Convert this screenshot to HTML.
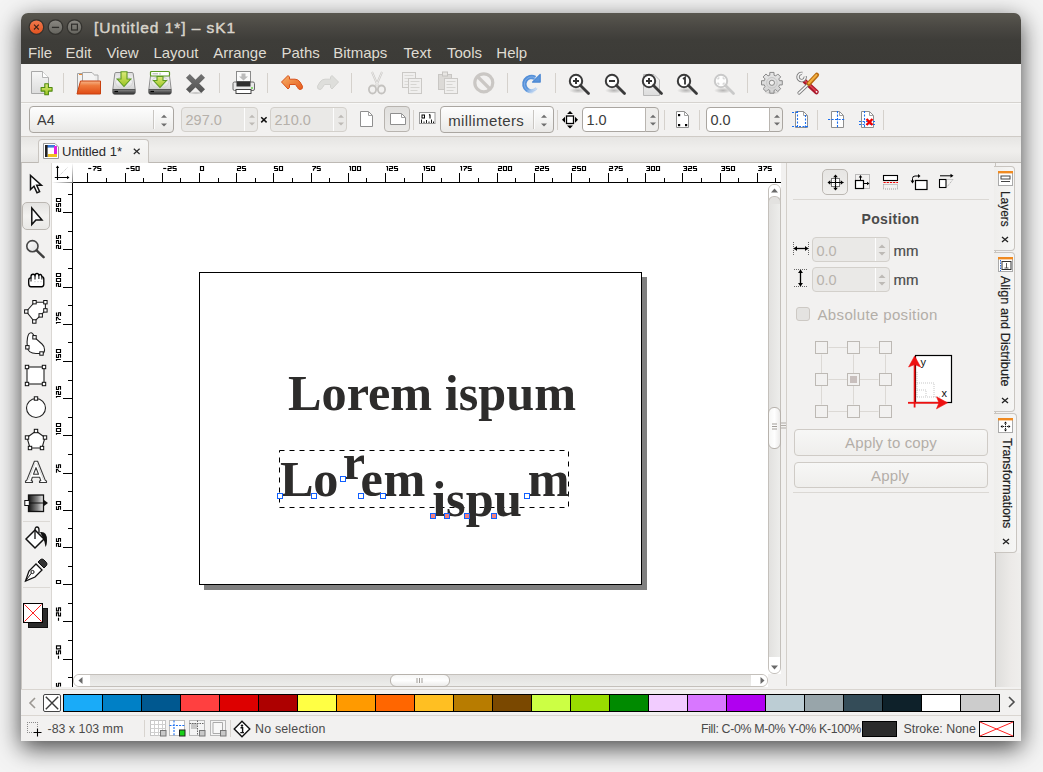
<!DOCTYPE html><html><head><meta charset="utf-8"><style>
*{margin:0;padding:0;box-sizing:border-box}
html,body{width:1043px;height:772px;overflow:hidden;background:#f4f4f4;font-family:"Liberation Sans",sans-serif}
.a{position:absolute}
.t{position:absolute;white-space:nowrap;line-height:1}
svg{position:absolute;overflow:visible}
#win{position:absolute;left:21px;top:13px;width:1000px;height:728px;background:#f2f1f0;border-radius:7px 7px 0 0;box-shadow:0 7px 24px rgba(0,0,0,0.72)}
.mi{position:absolute;top:45px;font-size:15px;color:#dfdbd2;line-height:1;white-space:nowrap}
.vsep{position:absolute;width:1px;background:#d5d1cc}
</style></head><body>
<div id="win"></div>
<svg width="0" height="0" style="position:absolute"><defs>
<linearGradient id="gpage" x1="0" y1="0" x2="0" y2="1"><stop offset="0" stop-color="#f7f7f7"/><stop offset="1" stop-color="#dcdcdc"/></linearGradient>
<linearGradient id="gorange" x1="0" y1="0" x2="0" y2="1"><stop offset="0" stop-color="#f6b58a"/><stop offset="0.35" stop-color="#ee7a3c"/><stop offset="1" stop-color="#e04a14"/></linearGradient>
<linearGradient id="ghdd" x1="0" y1="0" x2="0" y2="1"><stop offset="0" stop-color="#dcdcdc"/><stop offset="0.5" stop-color="#f4f4f4"/><stop offset="1" stop-color="#d0d0d0"/></linearGradient>
<linearGradient id="ggreen" x1="0" y1="0" x2="0" y2="1"><stop offset="0" stop-color="#dbe97a"/><stop offset="1" stop-color="#9cc420"/></linearGradient>
<linearGradient id="gundo" x1="0" y1="0" x2="1" y2="1"><stop offset="0" stop-color="#f7b36a"/><stop offset="1" stop-color="#e65a1a"/></linearGradient>
<radialGradient id="gshadow" cx="0.5" cy="0.5" r="0.5"><stop offset="0" stop-color="#000" stop-opacity="0.25"/><stop offset="1" stop-color="#000" stop-opacity="0"/></radialGradient>
</defs></svg>
<div class="a" style="left:21px;top:13px;width:1000px;height:51px;border-radius:7px 7px 0 0;background:linear-gradient(#59574f,#4a4843 14px,#3e3d39 27px,#3c3b37)"></div>
<svg style="left:21px;top:13px" width="80" height="30" viewBox="0 0 80 30"><defs><linearGradient id="gcl" x1="0" y1="0" x2="0" y2="1"><stop offset="0" stop-color="#f27a4e"/><stop offset="1" stop-color="#e2521f"/></linearGradient>
<linearGradient id="ggr" x1="0" y1="0" x2="0" y2="1"><stop offset="0" stop-color="#8a8882"/><stop offset="1" stop-color="#65645e"/></linearGradient></defs>
<circle cx="15.4" cy="14.1" r="7.3" fill="url(#gcl)" stroke="#33322e" stroke-width="1.2"/>
<path d="M13 11.7 L17.8 16.5 M17.8 11.7 L13 16.5" stroke="#3a2218" stroke-width="1.1"/>
<circle cx="34.5" cy="14.1" r="7.3" fill="url(#ggr)" stroke="#33322e" stroke-width="1.2"/>
<path d="M30.9 14.4 H38.1" stroke="#2f2e2b" stroke-width="1.3"/>
<circle cx="53.5" cy="14.1" r="7.3" fill="url(#ggr)" stroke="#33322e" stroke-width="1.2"/>
<rect x="50.6" y="11.2" width="5.8" height="5.8" fill="none" stroke="#2f2e2b" stroke-width="1.2"/></svg>
<div class="t" style="left:94px;top:20px;font-size:15.5px;font-weight:normal;-webkit-text-stroke:0.45px #d8d4cb;letter-spacing:0.95px;color:#d8d4cb">[Untitled 1*] – sK1</div>
<div class="mi" style="left:28px">File</div>
<div class="mi" style="left:65.6px">Edit</div>
<div class="mi" style="left:106.4px">View</div>
<div class="mi" style="left:153.4px">Layout</div>
<div class="mi" style="left:213.2px">Arrange</div>
<div class="mi" style="left:281.4px">Paths</div>
<div class="mi" style="left:333.2px">Bitmaps</div>
<div class="mi" style="left:403.6px">Text</div>
<div class="mi" style="left:447px">Tools</div>
<div class="mi" style="left:496.3px">Help</div>
<div class="a" style="left:21px;top:102px;width:1000px;height:1px;background:#d6d3cf"></div>
<div class="a" style="left:21px;top:103px;width:1000px;height:1px;background:#f8f8f7"></div>
<div class="vsep" style="left:63px;top:73px;height:20px"></div>
<div class="vsep" style="left:219px;top:73px;height:20px"></div>
<div class="vsep" style="left:267px;top:73px;height:20px"></div>
<div class="vsep" style="left:351px;top:73px;height:20px"></div>
<div class="vsep" style="left:507px;top:73px;height:20px"></div>
<div class="vsep" style="left:555px;top:73px;height:20px"></div>
<div class="vsep" style="left:747px;top:73px;height:20px"></div>
<svg style="left:30px;top:70px" width="24" height="26" viewBox="0 0 24 26"><path d="M1.5 1.5 H12.5 L18.5 7.5 V23.5 H1.5 Z" fill="url(#gpage)" stroke="#a9a9a9"/>
<path d="M12.5 1.5 V7.5 H18.5" fill="#fff" stroke="#b5b5b5"/>
<path d="M14.8 13.8 h3.6 v3.7 h3.7 v3.6 h-3.7 v3.7 h-3.6 v-3.7 h-3.7 v-3.6 h3.7 z" fill="url(#ggreen)" stroke="#4f8a0f" stroke-width="1.1" stroke-linejoin="round"/></svg>
<svg style="left:75px;top:70px" width="26" height="26" viewBox="0 0 26 26"><path d="M2.5 3.5 H9 V22 H2.5 Z" fill="#f2f2f2" stroke="#a0a0a0"/>
<path d="M4 4.5 h3" stroke="#f08a30" stroke-width="1"/>
<path d="M7.5 2.5 H17 L21 6.5 V20 H7.5 Z" fill="#f4f4f4" stroke="#a8a8a8"/>
<path d="M20 5 H23 V20 H20" fill="#eee" stroke="#aaa"/>
<path d="M5.5 11 H25.5 V24 H2 Z" fill="url(#gorange)" stroke="#c8400e" stroke-width="1"/></svg>
<svg style="left:112px;top:71px" width="24" height="24" viewBox="0 0 24 24"><defs><linearGradient id="gband" x1="0" y1="0" x2="0" y2="1"><stop offset="0" stop-color="#8a8a8a"/><stop offset="1" stop-color="#2a2a2a"/></linearGradient></defs>
<path d="M4 1.5 H20 Q21 1.5 21.2 2.5 L23.2 18.5 H0.8 L2.8 2.5 Q3 1.5 4 1.5 Z" fill="url(#ghdd)" stroke="#8e8e8e"/>
<path d="M0.8 18.5 H23.2 V21.5 Q23.2 23.2 21.5 23.2 H2.5 Q0.8 23.2 0.8 21.5 Z" fill="url(#gband)" stroke="#4a4a4a" stroke-width="0.8"/>
<path d="M2.5 20.5 H6" stroke="#000" stroke-width="1.2"/>
<ellipse cx="12" cy="11.5" rx="8.5" ry="6" fill="none" stroke="#d2d2d2"/><path d="M9 0.8 H15 V8 H18.8 L12 15.5 L5.2 8 H9 Z" fill="url(#ggreen)" stroke="#5d9a22" stroke-width="1.1"/></svg>
<svg style="left:148px;top:71px" width="24" height="24" viewBox="0 0 24 24"><defs><linearGradient id="gband" x1="0" y1="0" x2="0" y2="1"><stop offset="0" stop-color="#8a8a8a"/><stop offset="1" stop-color="#2a2a2a"/></linearGradient></defs>
<path d="M4 1.5 H20 Q21 1.5 21.2 2.5 L23.2 18.5 H0.8 L2.8 2.5 Q3 1.5 4 1.5 Z" fill="url(#ghdd)" stroke="#8e8e8e"/>
<path d="M0.8 18.5 H23.2 V21.5 Q23.2 23.2 21.5 23.2 H2.5 Q0.8 23.2 0.8 21.5 Z" fill="url(#gband)" stroke="#4a4a4a" stroke-width="0.8"/>
<path d="M2.5 20.5 H6" stroke="#000" stroke-width="1.2"/>
<ellipse cx="12" cy="11.5" rx="8.5" ry="6" fill="none" stroke="#d2d2d2"/><rect x="2.5" y="0.5" width="19" height="4.5" rx="1" fill="#fff" stroke="#5d9a22" stroke-width="1.2"/>
<path d="M4.5 2.8 H10 M12 1.8 V3.8" stroke="#999" stroke-width="0.8"/>
<path d="M9 5.5 H15 V9.5 H18.5 L12 16.5 L5.5 9.5 H9 Z" fill="url(#ggreen)" stroke="#5d9a22" stroke-width="1.1"/></svg>
<svg style="left:185px;top:73px" width="22" height="22" viewBox="0 0 22 22"><defs><linearGradient id="gx" x1="0" y1="0" x2="0" y2="1"><stop offset="0" stop-color="#707070"/><stop offset="1" stop-color="#555"/></linearGradient></defs>
<ellipse cx="11" cy="20" rx="8" ry="1.6" fill="url(#gshadow)"/>
<path d="M2.9 2.9 L18.1 18.1 M18.1 2.9 L2.9 18.1" stroke="url(#gx)" stroke-width="5.4" stroke-linecap="butt"/></svg>
<svg style="left:232px;top:71px" width="24" height="24" viewBox="0 0 24 24"><rect x="4.5" y="0.5" width="14" height="10" fill="#fafafa" stroke="#8a8a8a"/>
<path d="M9.5 2.5 h4 v3 h2.5 l-4.5 4 l-4.5 -4 h2.5 z" fill="#bbb"/>
<rect x="1" y="11" width="21.5" height="8.5" rx="1.5" fill="#e8e8e8" stroke="#6a6a6a"/>
<rect x="4.5" y="10.5" width="14" height="5" fill="#2f2f2f"/>
<rect x="4" y="18.5" width="15" height="4" fill="#fff" stroke="#444"/>
<circle cx="20" cy="17" r="0.9" fill="#60d040"/></svg>
<svg style="left:280px;top:74px" width="24" height="18" viewBox="0 0 24 18"><path d="M1.5 8 L8 1.5 L9.5 3 V5.2 H15 Q18 5.2 20 8 L22.5 12.2 Q23 15.5 20 15.5 Q18.5 15.5 17.5 13.5 L15.5 10.5 H9.5 V13.5 L8 15 Z" fill="url(#gundo)" stroke="#d8501a" stroke-width="1"/></svg>
<svg style="left:316px;top:74px" width="24" height="18" viewBox="0 0 24 18"><path d="M22.5 8 L16 1.5 L14.5 3 V5.2 H9 Q6 5.2 4 8 L1.5 12.2 Q1 15.5 4 15.5 Q5.5 15.5 6.5 13.5 L8.5 10.5 H14.5 V13.5 L16 15 Z" fill="#dededb" stroke="#d2d2cf" stroke-width="1"/></svg>
<svg style="left:367px;top:71px" width="20" height="24" viewBox="0 0 20 24"><path d="M5 1 L11 15 M15 1 L9 15" stroke="#c9c7c4" stroke-width="2"/>
<path d="M5 1 L11 15 M15 1 L9 15" stroke="#f2f1f0" stroke-width="0.8"/>
<ellipse cx="5.5" cy="18.5" rx="3.6" ry="4" fill="none" stroke="#c4c2bf" stroke-width="1.8"/>
<ellipse cx="14.5" cy="18.5" rx="3.6" ry="4" fill="none" stroke="#c4c2bf" stroke-width="1.8"/></svg>
<svg style="left:401px;top:71px" width="22" height="24" viewBox="0 0 22 24"><rect x="1.5" y="1.5" width="13" height="15" fill="#f0efee" stroke="#cbc9c6"/>
<path d="M3.5 4.5h9 M3.5 7.5h9 M3.5 10.5h9 M3.5 13.5h9" stroke="#d6d4d1" stroke-width="0.8"/>
<rect x="7.5" y="7.5" width="13" height="15" fill="#f0efee" stroke="#cbc9c6"/>
<path d="M9.5 10.5h9 M9.5 13.5h6 M9.5 16.5h9 M9.5 19.5h7" stroke="#d3d1ce" stroke-width="0.9"/></svg>
<svg style="left:437px;top:71px" width="22" height="24" viewBox="0 0 22 24"><rect x="1.5" y="3.5" width="13" height="15" fill="#dcdad7" stroke="#c9c7c4"/>
<rect x="5.5" y="1" width="5" height="4" fill="#e8e6e3" stroke="#c5c3c0"/>
<rect x="7.5" y="7.5" width="13" height="15" fill="#f0efee" stroke="#cbc9c6"/>
<path d="M9.5 10.5h9 M9.5 13.5h6 M9.5 16.5h9 M9.5 19.5h7" stroke="#d3d1ce" stroke-width="0.9"/></svg>
<svg style="left:472px;top:72px" width="24" height="22" viewBox="0 0 24 22"><circle cx="11.8" cy="10.8" r="9" fill="none" stroke="#cac7c4" stroke-width="3.2"/>
<path d="M5.5 4.5 L18 17" stroke="#cac7c4" stroke-width="3.2"/></svg>
<svg style="left:516px;top:70px" width="30" height="26" viewBox="0 0 30 26"><defs><linearGradient id="grf" x1="0" y1="0" x2="1" y2="1"><stop offset="0" stop-color="#4f8bd6"/><stop offset="0.55" stop-color="#5d97dc"/><stop offset="0.85" stop-color="#a9c9f0" stop-opacity="0.6"/><stop offset="1" stop-color="#ffffff" stop-opacity="0"/></linearGradient></defs>
<path d="M19.1 7.9 A7.2 7.2 0 1 0 21.2 18.6" fill="none" stroke="url(#grf)" stroke-width="4.4"/>
<path d="M19.1 7.9 A7.2 7.2 0 1 0 21.2 18.6" fill="none" stroke="#9cc0ee" stroke-width="1" opacity="0.6"/>
<path d="M24.2 4.4 V12.1 H16.5 Z" fill="#5b95da" stroke="#4a86d2" stroke-width="1.2" stroke-linejoin="round"/></svg>
<svg style="left:568px;top:73px" width="23" height="22" viewBox="0 0 23 22"><ellipse cx="10" cy="17.5" rx="9" ry="3" fill="url(#gshadow)"/><circle cx="8" cy="8" r="6.2" fill="#fff" fill-opacity="0.9" stroke="#3a3a3a" stroke-width="2"/>
<path d="M12.5 12.5 L20.5 20.5" stroke="#3a3a3a" stroke-width="2.8" stroke-linecap="round"/><path d="M5 8 H11 M8 5 V11" stroke="#333" stroke-width="2"/></svg>
<svg style="left:604px;top:73px" width="23" height="22" viewBox="0 0 23 22"><ellipse cx="10" cy="17.5" rx="9" ry="3" fill="url(#gshadow)"/><circle cx="8" cy="8" r="6.2" fill="#fff" fill-opacity="0.9" stroke="#3a3a3a" stroke-width="2"/>
<path d="M12.5 12.5 L20.5 20.5" stroke="#3a3a3a" stroke-width="2.8" stroke-linecap="round"/><path d="M5 8 H11" stroke="#333" stroke-width="2"/></svg>
<svg style="left:641px;top:73px" width="23" height="22" viewBox="0 0 23 22"><path d="M2.5 1.5 H13 L18.5 7 V22.5 H2.5 Z" fill="url(#gpage)" stroke="#b8b8b8"/><circle cx="8" cy="8" r="6.2" fill="#fff" fill-opacity="0.9" stroke="#3a3a3a" stroke-width="2"/>
<path d="M12.5 12.5 L20.5 20.5" stroke="#3a3a3a" stroke-width="2.8" stroke-linecap="round"/><path d="M5 8 H11 M8 5 V11" stroke="#333" stroke-width="2"/></svg>
<svg style="left:676px;top:73px" width="23" height="22" viewBox="0 0 23 22"><ellipse cx="10" cy="17.5" rx="9" ry="3" fill="url(#gshadow)"/><circle cx="8" cy="8" r="6.2" fill="#fff" fill-opacity="0.9" stroke="#3a3a3a" stroke-width="2"/>
<path d="M12.5 12.5 L20.5 20.5" stroke="#3a3a3a" stroke-width="2.8" stroke-linecap="round"/><path d="M7 6 L9 4.5 V11.5" fill="none" stroke="#333" stroke-width="1.8"/></svg>
<svg style="left:713px;top:73px" width="23" height="22" viewBox="0 0 23 22"><ellipse cx="10" cy="17.5" rx="9" ry="3" fill="url(#gshadow)"/><circle cx="8" cy="8" r="6.2" fill="#fff" fill-opacity="0.9" stroke="#c9c9c9" stroke-width="2"/>
<path d="M12.5 12.5 L20.5 20.5" stroke="#c9c9c9" stroke-width="2.8" stroke-linecap="round"/><path d="M5 6.5 V5 H6.5 M9.5 5 H11 V6.5 M11 9.5 V11 H9.5 M6.5 11 H5 V9.5" fill="none" stroke="#c8c8c8" stroke-width="1"/></svg>
<svg style="left:760px;top:71px" width="24" height="24" viewBox="0 0 24 24"><defs><linearGradient id="ggear" x1="0" y1="0" x2="0" y2="1"><stop offset="0" stop-color="#e6e6e6"/><stop offset="1" stop-color="#d2d2d2"/></linearGradient></defs>
<ellipse cx="12" cy="21.5" rx="8" ry="2" fill="url(#gshadow)"/>
<path d="M9.79 4.19 L9.79 1.41 L14.01 1.41 L14.01 4.19 L15.79 4.93 L17.76 2.96 L20.74 5.94 L18.77 7.91 L19.51 9.69 L22.29 9.69 L22.29 13.91 L19.51 13.91 L18.77 15.69 L20.74 17.66 L17.76 20.64 L15.79 18.67 L14.01 19.41 L14.01 22.19 L9.79 22.19 L9.79 19.41 L8.01 18.67 L6.04 20.64 L3.06 17.66 L5.03 15.69 L4.29 13.91 L1.51 13.91 L1.51 9.69 L4.29 9.69 L5.03 7.91 L3.06 5.94 L6.04 2.96 L8.01 4.93 Z" fill="url(#ggear)" stroke="#8a8a8a" stroke-width="1" stroke-linejoin="round"/>
<circle cx="11.9" cy="11.8" r="5.3" fill="none" stroke="#c6c6c6" stroke-width="1"/>
<circle cx="11.9" cy="11.8" r="2.6" fill="#f2f1f0" stroke="#8a8a8a" stroke-width="1"/></svg>
<svg style="left:796px;top:71px" width="24" height="24" viewBox="0 0 24 24"><path d="M8.5 10 L20.5 21" stroke="#a8182a" stroke-width="4.6" stroke-linecap="round"/>
<path d="M9 9.8 L20.3 20.3" stroke="#de4050" stroke-width="1.6" stroke-linecap="round"/>
<circle cx="20.6" cy="20.8" r="0.9" fill="#fff"/>
<path d="M9.15 5.37 A3.6 3.6 0 1 1 6.23 2.45" fill="none" stroke="#7c7c7c" stroke-width="3.4"/><path d="M9.15 5.37 A3.6 3.6 0 1 1 6.23 2.45" fill="none" stroke="#f4f4f4" stroke-width="1.6"/>
<path d="M12 13.5 L3 22" stroke="#7a7a7a" stroke-width="3.2" stroke-linecap="round"/>
<path d="M12 13.5 L3 22" stroke="#f8f8f8" stroke-width="1.7" stroke-linecap="round"/>
<path d="M12.8 12.6 L20.8 4" stroke="#b86a10" stroke-width="4.6" stroke-linecap="round"/>
<path d="M12.8 12.2 L20.5 4" stroke="#f2b040" stroke-width="2" stroke-linecap="round"/></svg>
<div class="a" style="left:21px;top:136px;width:1000px;height:1px;background:#cfcbc6"></div>
<div class="a" style="left:29px;top:106px;width:145px;height:27px;border:1px solid #aaa6a1;border-radius:4px;background:linear-gradient(#fdfdfd,#f4f4f3 50%,#e9e8e6)"></div>
<div class="a" style="left:153px;top:110px;width:1px;height:19px;background:#c9c6c2"></div>
<div class="a" style="left:154px;top:110px;width:1px;height:19px;background:#fbfbfb"></div>
<div class="t" style="left:37px;top:112.5px;font-size:14.5px;letter-spacing:0.2px;color:#3c3c3c">A4</div>
<svg style="left:159.5px;top:114px" width="8" height="13"><path d="M1 3.8 L4 0.8 L7 3.8 Z" fill="#6e6e6e"/><path d="M1 9.5 L7 9.5 L4 12.5 Z" fill="#6e6e6e"/></svg>
<div class="a" style="left:181px;top:107px;width:77px;height:25px;border:1px solid #d3d0cb;border-radius:4px;background:#eae9e7"></div>
<div class="a" style="left:244px;top:108px;width:1px;height:23px;background:#fdfdfd"></div>
<div class="t" style="left:185.5px;top:113px;font-size:14.5px;color:#b5b0aa">297.0</div>
<svg style="left:247.5px;top:114px" width="8" height="12"><path d="M1 3.8 L4 0.8 L7 3.8 Z" fill="#bdbab6"/><path d="M1 8.5 L7 8.5 L4 11.5 Z" fill="#bdbab6"/></svg>
<svg style="left:260px;top:116px" width="8" height="8" viewBox="0 0 8 8"><path d="M1.2 1.2 L6.6 6.4 M6.6 1.2 L1.2 6.4" stroke="#111" stroke-width="1.5"/></svg>
<div class="a" style="left:270px;top:107px;width:77px;height:25px;border:1px solid #d3d0cb;border-radius:4px;background:#eae9e7"></div>
<div class="a" style="left:333px;top:108px;width:1px;height:23px;background:#fdfdfd"></div>
<div class="t" style="left:274.5px;top:113px;font-size:14.5px;color:#b5b0aa">210.0</div>
<svg style="left:336.5px;top:114px" width="8" height="12"><path d="M1 3.8 L4 0.8 L7 3.8 Z" fill="#bdbab6"/><path d="M1 8.5 L7 8.5 L4 11.5 Z" fill="#bdbab6"/></svg>
<svg style="left:360px;top:111px" width="14" height="17" viewBox="0 0 14 17"><path d="M0.5 0.5 H8.5 L12.5 4.5 V15.5 H0.5 Z" fill="#fff" stroke="#8f8f8f"/><path d="M8.5 0.5 V4.5 H12.5" fill="none" stroke="#a0a0a0"/></svg>
<div class="a" style="left:384px;top:106px;width:26px;height:26px;border:1px solid #b8b4af;border-radius:4px;background:linear-gradient(#e0dfdd,#ebeae8)"></div>
<svg style="left:390px;top:113px" width="17" height="13" viewBox="0 0 17 13"><path d="M0.5 0.5 H11.5 L15.5 4.5 V11.5 H0.5 Z" fill="#fff" stroke="#8f8f8f"/><path d="M11.5 0.5 V4.5 H15.5" fill="none" stroke="#a0a0a0"/></svg>
<div class="vsep" style="left:413px;top:110px;height:20px"></div>
<div class="vsep" style="left:557px;top:110px;height:20px"></div>
<div class="vsep" style="left:664px;top:110px;height:20px"></div>
<div class="vsep" style="left:699px;top:110px;height:20px"></div>
<div class="vsep" style="left:817px;top:110px;height:20px"></div>
<div class="vsep" style="left:883px;top:110px;height:20px"></div>
<svg style="left:419px;top:112px" width="17" height="12" viewBox="0 0 17 12"><rect x="0.5" y="0.5" width="15.5" height="11" fill="#fff" stroke="#9a9a9a"/>
<rect x="3" y="3" width="2.5" height="3" fill="none" stroke="#000" stroke-width="1"/>
<path d="M11 2.5 V6.5 M10 3 L11 2.5" stroke="#000" stroke-width="1.1"/>
<path d="M2.5 11 V7.5 M5 11 V9.5 M7.5 11 V8 M10 11 V9.5 M12.5 11 V7.5 M14.5 11 V9.5" stroke="#000" stroke-width="0.9"/></svg>
<div class="a" style="left:440px;top:106px;width:114px;height:27px;border:1px solid #aaa6a1;border-radius:4px;background:linear-gradient(#fdfdfd,#f4f4f3 50%,#e9e8e6)"></div>
<div class="a" style="left:533px;top:110px;width:1px;height:19px;background:#c9c6c2"></div>
<div class="a" style="left:534px;top:110px;width:1px;height:19px;background:#fbfbfb"></div>
<div class="t" style="left:448.2px;top:112.5px;font-size:15px;letter-spacing:0.4px;color:#3c3c3c">millimeters</div>
<svg style="left:539.5px;top:114px" width="8" height="13"><path d="M1 3.8 L4 0.8 L7 3.8 Z" fill="#6e6e6e"/><path d="M1 9.5 L7 9.5 L4 12.5 Z" fill="#6e6e6e"/></svg>
<svg style="left:562px;top:111px" width="17" height="18" viewBox="0 0 17 18"><rect x="4.5" y="5" width="7" height="7.5" fill="#fff" stroke="#000" stroke-width="1.3"/>
<path d="M8 0 L11 3 H5 Z M8 17.5 L11 14.5 H5 Z M0 8.75 L3 5.75 V11.75 Z M16 8.75 L13 5.75 V11.75 Z" fill="#000"/></svg>
<div class="a" style="left:582px;top:107px;width:77px;height:25px;border:1px solid #aaa6a1;border-radius:4px;background:linear-gradient(90deg,#fff 62px,#eeedeb 62px)"></div>
<div class="a" style="left:645px;top:107px;width:1px;height:25px;background:#b9b5b0"></div>
<div class="t" style="left:586.5px;top:113px;font-size:14.5px;color:#3c3c3c">1.0</div>
<svg style="left:648.5px;top:114px" width="8" height="12"><path d="M1 3.8 L4 0.8 L7 3.8 Z" fill="#6e6e6e"/><path d="M1 8.5 L7 8.5 L4 11.5 Z" fill="#6e6e6e"/></svg>
<svg style="left:676px;top:111px" width="14" height="18" viewBox="0 0 14 18"><path d="M0.5 0.5 H8.5 L12.5 4.5 V16.5 H0.5 Z" fill="#fff" stroke="#8f8f8f"/><path d="M8.5 0.5 V4.5 H12.5" fill="none" stroke="#a0a0a0"/>
<rect x="2" y="3" width="2.2" height="2.2" fill="#000"/><rect x="2" y="13" width="2.2" height="2.2" fill="#000"/><rect x="9" y="13" width="2.2" height="2.2" fill="#000"/></svg>
<div class="a" style="left:706px;top:107px;width:77px;height:25px;border:1px solid #aaa6a1;border-radius:4px;background:linear-gradient(90deg,#fff 62px,#eeedeb 62px)"></div>
<div class="a" style="left:769px;top:107px;width:1px;height:25px;background:#b9b5b0"></div>
<div class="t" style="left:710.5px;top:113px;font-size:14.5px;color:#3c3c3c">0.0</div>
<svg style="left:772.5px;top:114px" width="8" height="12"><path d="M1 3.8 L4 0.8 L7 3.8 Z" fill="#6e6e6e"/><path d="M1 8.5 L7 8.5 L4 11.5 Z" fill="#6e6e6e"/></svg>
<svg style="left:792px;top:111px" width="18" height="18" viewBox="0 0 18 18"><path d="M3.5 0.5 H11.5 L15.5 4.5 V16.5 H3.5 Z" fill="#fff" stroke="#8f8f8f"/><path d="M11.5 0.5 V4.5 H15.5" fill="none" stroke="#a0a0a0"/><path d="M0 1.5 H5 M0 15.5 H17 M5.5 0 V17 M13.5 4 V17" stroke="#1a6ef0" stroke-width="1.1" stroke-dasharray="2 1.5" fill="none"/></svg>
<svg style="left:828px;top:111px" width="18" height="18" viewBox="0 0 18 18"><path d="M3.5 0.5 H11.5 L15.5 4.5 V16.5 H3.5 Z" fill="#fff" stroke="#8f8f8f"/><path d="M11.5 0.5 V4.5 H15.5" fill="none" stroke="#a0a0a0"/><path d="M0 8.5 H17 M9.5 0 V17" stroke="#1a6ef0" stroke-width="1.1" stroke-dasharray="2.2 1.3" fill="none"/></svg>
<svg style="left:858px;top:111px" width="18" height="18" viewBox="0 0 18 18"><path d="M3.5 0.5 H11.5 L15.5 4.5 V16.5 H3.5 Z" fill="#fff" stroke="#8f8f8f"/><path d="M11.5 0.5 V4.5 H15.5" fill="none" stroke="#a0a0a0"/><path d="M1 10.5 H18 M1 13.5 H18 M6.5 0 V17" stroke="#1a6ef0" stroke-width="1.1" stroke-dasharray="2 1.5" fill="none"/><path d="M8.5 8 L14.5 14 M14.5 8 L8.5 14" stroke="#ee0000" stroke-width="2.4"/></svg>
<div class="a" style="left:21px;top:137px;width:1000px;height:25px;background:linear-gradient(#e6e5e3,#efeeec 45%,#efeeec 60%,#e5e4e2)"></div>
<div class="a" style="left:21px;top:162px;width:1000px;height:1px;background:#bdb9b4"></div>
<div class="a" style="left:38px;top:139px;width:111px;height:24px;border:1px solid #c9c5c0;border-bottom:none;border-radius:4px 4px 0 0;background:linear-gradient(#f7f7f6,#f0efed)"></div>
<svg style="left:43px;top:143px" width="16" height="16" viewBox="0 0 16 16"><path d="M0.5 0.5 H12 L15.5 4 V15.5 H0.5 Z" fill="#fff" stroke="#9a9a9a"/>
<rect x="2" y="2" width="10" height="2.6" fill="#3a7ad8"/>
<rect x="2" y="2" width="2.6" height="12" fill="#222"/>
<rect x="11" y="3" width="3" height="8" fill="#e020e0"/>
<rect x="5" y="11" width="9" height="3" fill="#f0c020"/></svg>
<div class="t" style="left:62px;top:145px;font-size:13px;color:#2a2a2a">Untitled 1*</div>
<svg style="left:133px;top:148px" width="8" height="7" viewBox="0 0 8 7"><path d="M0.8 0.8 L6.6 6 M6.6 0.8 L0.8 6" stroke="#2a2a2a" stroke-width="1.2"/></svg>
<div class="a" style="left:21px;top:163px;width:1px;height:526px;background:#c8c5c1"></div>
<div class="a" style="left:51px;top:163px;width:1px;height:526px;background:#dad7d3"></div>
<div class="a" style="left:23px;top:521px;width:27px;height:1px;background:#dcd9d5"></div>
<div class="a" style="left:23px;top:587px;width:27px;height:1px;background:#dcd9d5"></div>
<div class="a" style="left:22px;top:202px;width:28px;height:28px;border:1px solid #bbb7b2;border-radius:5px;background:linear-gradient(#e4e3e1,#f3f2f0 50%,#e9e8e6)"></div>
<svg style="left:29px;top:174px" width="14" height="21" viewBox="0 0 14 21"><path d="M1.5 1.5 V15.5 L5 12.3 L8 18.8 L10.6 17.6 L7.7 11.2 L12.4 11.2 Z" fill="#fff" stroke="#111" stroke-width="1.5" stroke-linejoin="miter"/></svg>
<svg style="left:30px;top:206px" width="14" height="21" viewBox="0 0 14 21"><path d="M1.8 2 V18.6 L5.9 14 H12 Z" fill="#fbfbfb" stroke="#111" stroke-width="1.5"/></svg>
<svg style="left:25px;top:239px" width="22" height="21" viewBox="0 0 22 21"><defs><linearGradient id="glens" x1="0" y1="0" x2="1" y2="1"><stop offset="0" stop-color="#fff"/><stop offset="1" stop-color="#dcdcdc"/></linearGradient></defs><circle cx="7.4" cy="7.2" r="5.6" fill="url(#glens)" stroke="#444" stroke-width="1.6"/><path d="M11.6 11.4 L18.6 18.2" stroke="#3e3e3e" stroke-width="2.4" stroke-linecap="round"/></svg>
<svg style="left:26px;top:272px" width="20" height="17" viewBox="0 0 20 17"><path d="M2.7 11.5 V8.2 Q2.7 5.8 4.8 5.8 H5 V4.5 Q5 2.2 7 2.2 Q8.6 2.2 9 3.2 Q9.6 1.3 11.2 1.5 Q12.6 1.7 12.9 3 Q13.5 2.3 14.6 2.5 Q15.8 2.8 15.9 4.6 Q17.8 4.8 17.8 7 V12.3 Q17.8 14.7 15.6 14.7 H5 Q2.7 14.7 2.7 11.5 Z" fill="#fff" stroke="#000" stroke-width="1.35"/><path d="M5 5.8 V9.5 M9 3.2 V7.5 M12.9 3 V7 M15.9 4.6 V7.5" stroke="#000" stroke-width="1"/><path d="M8.5 9.7 h1 M11.5 9.7 h1 M14.5 9.7 h1" stroke="#aaa" stroke-width="0.8"/></svg>
<svg style="left:20px;top:290px" width="30" height="35" viewBox="0 0 30 35"><path d="M6.3 21.5 L14.5 12.2 H25.4 V20.4 L20.7 25.4 L14.3 31.5 Z" fill="#fff" stroke="#222" stroke-width="1.1"/><rect x="4.6" y="19.8" width="3.4" height="3.4" fill="#fff" stroke="#111" stroke-width="1"/><rect x="12.8" y="10.5" width="3.4" height="3.4" fill="#fff" stroke="#111" stroke-width="1"/><rect x="23.7" y="10.5" width="3.4" height="3.4" fill="#fff" stroke="#111" stroke-width="1"/><rect x="23.7" y="18.7" width="3.4" height="3.4" fill="#fff" stroke="#111" stroke-width="1"/><rect x="19.0" y="23.7" width="3.4" height="3.4" fill="#fff" stroke="#111" stroke-width="1"/><rect x="12.600000000000001" y="29.8" width="3.4" height="3.4" fill="#fff" stroke="#111" stroke-width="1"/></svg>
<svg style="left:20px;top:325px" width="30" height="35" viewBox="0 0 30 35"><path d="M7.4 22.3 C6.5 15 7.5 8 11 7.8 C13 7.7 13.5 10 14.5 12.3 L22 19 C25.5 22 25.5 28.5 21.5 28.5 L16 28.5 C11 28.5 7.8 26 7.4 22.3 Z" fill="#fff" stroke="#222" stroke-width="1.1"/><rect x="12.8" y="10.600000000000001" width="3.4" height="3.4" fill="#fff" stroke="#111" stroke-width="1"/><rect x="5.7" y="20.6" width="3.4" height="3.4" fill="#fff" stroke="#111" stroke-width="1"/><rect x="19.8" y="26.8" width="3.4" height="3.4" fill="#fff" stroke="#111" stroke-width="1"/></svg>
<svg style="left:25px;top:365px" width="21" height="21" viewBox="0 0 21 21"><rect x="2" y="2" width="17" height="17" fill="#fff" stroke="#222" stroke-width="1.1"/><rect x="0.30000000000000004" y="0.30000000000000004" width="3.4" height="3.4" fill="#fff" stroke="#111" stroke-width="1"/><rect x="17.3" y="0.30000000000000004" width="3.4" height="3.4" fill="#fff" stroke="#111" stroke-width="1"/><rect x="0.30000000000000004" y="17.3" width="3.4" height="3.4" fill="#fff" stroke="#111" stroke-width="1"/><rect x="17.3" y="17.3" width="3.4" height="3.4" fill="#fff" stroke="#111" stroke-width="1"/></svg>
<svg style="left:25px;top:396px" width="22" height="23" viewBox="0 0 22 23"><circle cx="11" cy="12" r="9.5" fill="#fff" stroke="#222" stroke-width="1.1"/><rect x="9.3" y="0.8" width="3.4" height="3.4" fill="#fff" stroke="#111" stroke-width="1"/></svg>
<svg style="left:25px;top:429px" width="22" height="22" viewBox="0 0 22 22"><path d="M11 2 L20 8.5 L17 19 H5 L2 8.5 Z" fill="#fff" stroke="#222" stroke-width="1.1"/><rect x="9.3" y="0.30000000000000004" width="3.4" height="3.4" fill="#fff" stroke="#111" stroke-width="1"/><rect x="18.3" y="6.8" width="3.4" height="3.4" fill="#fff" stroke="#111" stroke-width="1"/><rect x="15.3" y="17.3" width="3.4" height="3.4" fill="#fff" stroke="#111" stroke-width="1"/><rect x="3.3" y="17.3" width="3.4" height="3.4" fill="#fff" stroke="#111" stroke-width="1"/><rect x="0.30000000000000004" y="6.8" width="3.4" height="3.4" fill="#fff" stroke="#111" stroke-width="1"/></svg>
<svg style="left:24px;top:460px" width="24" height="25" viewBox="0 0 24 25"><path d="M1.5 22.5 H8.5 V21 L7.2 20.6 L8.4 17.2 H15.6 L16.8 20.6 L15.5 21 V22.5 H22.5 V21 L21.4 20.6 L13.6 1.2 H10.4 L2.6 20.6 L1.5 21 Z M9.5 14.3 H14.5 L12 7.6 Z" fill="#fff" fill-rule="evenodd" stroke="#3a3a3a" stroke-width="1.1" stroke-linejoin="round"/><path d="M4.5 20 L11.2 3.2 M12.8 3.2 L19.5 20" stroke="#bbb" stroke-width="0.6"/></svg>
<svg style="left:24px;top:494px" width="24" height="19" viewBox="0 0 24 19"><defs><linearGradient id="gg" x1="0" x2="1"><stop offset="0" stop-color="#111"/><stop offset="0.6" stop-color="#888"/><stop offset="1" stop-color="#eee"/></linearGradient></defs>
<rect x="4.5" y="1" width="15" height="16.5" fill="url(#gg)" stroke="#111" stroke-width="1.3"/>
<rect x="0.8" y="6.5" width="4.5" height="5" fill="#fff" stroke="#111"/>
<path d="M5 9 H21" stroke="#111" stroke-width="1"/><path d="M20 6 L24 9 L20 12 Z" fill="#111"/></svg>
<svg style="left:24px;top:526px" width="25" height="24" viewBox="0 0 25 24"><path d="M2 13 L11 4 L20 13 L11 22 Z" fill="#fff" stroke="#111" stroke-width="1.5"/>
<path d="M11 13 V4 Q11 1 13 1 Q15 1 15 4 V7" fill="none" stroke="#111" stroke-width="1.3"/>
<path d="M16 6 Q23 5 23 14 Q23 19 21.5 21 Q21 16 19 12 Z" fill="#111"/></svg>
<svg style="left:24px;top:558px" width="24" height="25" viewBox="0 0 24 25"><path d="M1.5 23 L5 13 L12 6 L18 12 L11 19 Z" fill="#fff" stroke="#111" stroke-width="1.3"/>
<path d="M1.5 23 L7.5 15" stroke="#111" stroke-width="1"/><circle cx="8.5" cy="14" r="1.6" fill="#fff" stroke="#111"/>
<path d="M14 4 L16.5 1.5 Q18 0.5 19.5 1.5 L22.5 4.5 Q23.5 6 22.5 7.5 L20 10 Z" fill="#333" stroke="#111"/></svg>
<div class="a" style="left:28px;top:608px;width:20px;height:20px;background:#2b2b2b;border:1px solid #111"></div>
<svg style="left:23px;top:603px" width="20" height="20" viewBox="0 0 20 20"><rect x="0.5" y="0.5" width="19" height="19" fill="#fff" stroke="#000"/><path d="M1.5 1.5 L18.5 18.5 M18.5 1.5 L1.5 18.5" stroke="#ff2020" stroke-width="1"/></svg>
<div class="a" style="left:52px;top:163px;width:729px;height:524px;background:#fff"></div>
<div class="a" style="left:52px;top:182px;width:21px;height:1px;background:linear-gradient(90deg,#fff,#777)"></div>
<div class="a" style="left:72px;top:163px;width:1px;height:20px;background:linear-gradient(#fff,#777)"></div>
<svg style="left:54px;top:165px" width="17" height="17" viewBox="0 0 17 17"><path d="M3.5 1 V15 M0.8 12.5 H15" stroke="#000" stroke-width="1.1"/>
<path d="M3.5 0.5 L1.8 3 H5.2 Z M15.5 12.5 L13 10.8 V14.2 Z" fill="#000"/>
<path d="M5.5 10.5 L14 2" stroke="#aaa" stroke-width="0.7" stroke-dasharray="1 1"/></svg>
<svg style="left:0;top:0" width="1043" height="772"><path d="M73 182.5 H781" stroke="#000" stroke-width="1"/><path d="M87.5 173 V182" stroke="#000" stroke-width="1"/><path d="M106.5 178 V182" stroke="#000" stroke-width="1"/><path d="M125.5 173 V182" stroke="#000" stroke-width="1"/><path d="M143.5 178 V182" stroke="#000" stroke-width="1"/><path d="M162.5 173 V182" stroke="#000" stroke-width="1"/><path d="M180.5 178 V182" stroke="#000" stroke-width="1"/><path d="M199.5 173 V182" stroke="#000" stroke-width="1"/><path d="M218.5 178 V182" stroke="#000" stroke-width="1"/><path d="M236.5 173 V182" stroke="#000" stroke-width="1"/><path d="M255.5 178 V182" stroke="#000" stroke-width="1"/><path d="M273.5 173 V182" stroke="#000" stroke-width="1"/><path d="M292.5 178 V182" stroke="#000" stroke-width="1"/><path d="M311.5 173 V182" stroke="#000" stroke-width="1"/><path d="M329.5 178 V182" stroke="#000" stroke-width="1"/><path d="M348.5 173 V182" stroke="#000" stroke-width="1"/><path d="M366.5 178 V182" stroke="#000" stroke-width="1"/><path d="M385.5 173 V182" stroke="#000" stroke-width="1"/><path d="M404.5 178 V182" stroke="#000" stroke-width="1"/><path d="M422.5 173 V182" stroke="#000" stroke-width="1"/><path d="M441.5 178 V182" stroke="#000" stroke-width="1"/><path d="M459.5 173 V182" stroke="#000" stroke-width="1"/><path d="M478.5 178 V182" stroke="#000" stroke-width="1"/><path d="M497.5 173 V182" stroke="#000" stroke-width="1"/><path d="M515.5 178 V182" stroke="#000" stroke-width="1"/><path d="M534.5 173 V182" stroke="#000" stroke-width="1"/><path d="M552.5 178 V182" stroke="#000" stroke-width="1"/><path d="M571.5 173 V182" stroke="#000" stroke-width="1"/><path d="M589.5 178 V182" stroke="#000" stroke-width="1"/><path d="M608.5 173 V182" stroke="#000" stroke-width="1"/><path d="M627.5 178 V182" stroke="#000" stroke-width="1"/><path d="M645.5 173 V182" stroke="#000" stroke-width="1"/><path d="M664.5 178 V182" stroke="#000" stroke-width="1"/><path d="M682.5 173 V182" stroke="#000" stroke-width="1"/><path d="M701.5 178 V182" stroke="#000" stroke-width="1"/><path d="M720.5 173 V182" stroke="#000" stroke-width="1"/><path d="M738.5 178 V182" stroke="#000" stroke-width="1"/><path d="M757.5 173 V182" stroke="#000" stroke-width="1"/><path d="M775.5 178 V182" stroke="#000" stroke-width="1"/><path d="M72.5 183 V687" stroke="#000" stroke-width="1"/><path d="M68 677.5 H72" stroke="#000" stroke-width="1"/><path d="M63 659.5 H72" stroke="#000" stroke-width="1"/><path d="M68 640.5 H72" stroke="#000" stroke-width="1"/><path d="M63 621.5 H72" stroke="#000" stroke-width="1"/><path d="M68 603.5 H72" stroke="#000" stroke-width="1"/><path d="M63 584.5 H72" stroke="#000" stroke-width="1"/><path d="M68 566.5 H72" stroke="#000" stroke-width="1"/><path d="M63 547.5 H72" stroke="#000" stroke-width="1"/><path d="M68 528.5 H72" stroke="#000" stroke-width="1"/><path d="M63 510.5 H72" stroke="#000" stroke-width="1"/><path d="M68 491.5 H72" stroke="#000" stroke-width="1"/><path d="M63 473.5 H72" stroke="#000" stroke-width="1"/><path d="M68 454.5 H72" stroke="#000" stroke-width="1"/><path d="M63 435.5 H72" stroke="#000" stroke-width="1"/><path d="M68 417.5 H72" stroke="#000" stroke-width="1"/><path d="M63 398.5 H72" stroke="#000" stroke-width="1"/><path d="M68 380.5 H72" stroke="#000" stroke-width="1"/><path d="M63 361.5 H72" stroke="#000" stroke-width="1"/><path d="M68 342.5 H72" stroke="#000" stroke-width="1"/><path d="M63 324.5 H72" stroke="#000" stroke-width="1"/><path d="M68 305.5 H72" stroke="#000" stroke-width="1"/><path d="M63 287.5 H72" stroke="#000" stroke-width="1"/><path d="M68 268.5 H72" stroke="#000" stroke-width="1"/><path d="M63 249.5 H72" stroke="#000" stroke-width="1"/><path d="M68 231.5 H72" stroke="#000" stroke-width="1"/><path d="M63 212.5 H72" stroke="#000" stroke-width="1"/><path d="M68 194.5 H72" stroke="#000" stroke-width="1"/></svg>
<div class="a" style="left:73px;top:163px;width:708px;height:19px;overflow:hidden"><svg style="left:-73px;top:-163px" width="1043" height="772"><g fill="none" stroke="#000" stroke-width="1.15" stroke-linecap="butt"><g transform="translate(88 166)"><path transform="translate(0 0)" d="M0.2 2.5 H3.3"/><path transform="translate(4.6 0)" d="M0.2 0.5 H3.5 V1.5 L1.5 3.2 V4.8"/><path transform="translate(9.3 0)" d="M3.8 0.5 H0.5 V2.5 H3.5 V4.5 H0.2"/></g><g transform="translate(126 166)"><path transform="translate(0 0)" d="M0.2 2.5 H3.3"/><path transform="translate(4.6 0)" d="M3.8 0.5 H0.5 V2.5 H3.5 V4.5 H0.2"/><path transform="translate(9.6 0)" d="M0.5 0.5 H3.5 V4.5 H0.5 Z"/></g><g transform="translate(163 166)"><path transform="translate(0 0)" d="M0.2 2.5 H3.3"/><path transform="translate(4.6 0)" d="M0.2 0.5 H3.5 V2.5 H0.5 V4.5 H3.8"/><path transform="translate(9.6 0)" d="M3.8 0.5 H0.5 V2.5 H3.5 V4.5 H0.2"/></g><g transform="translate(200 166)"><path transform="translate(0 0)" d="M0.5 0.5 H3.5 V4.5 H0.5 Z"/></g><g transform="translate(237 166)"><path transform="translate(0 0)" d="M0.2 0.5 H3.5 V2.5 H0.5 V4.5 H3.8"/><path transform="translate(5 0)" d="M3.8 0.5 H0.5 V2.5 H3.5 V4.5 H0.2"/></g><g transform="translate(274 166)"><path transform="translate(0 0)" d="M3.8 0.5 H0.5 V2.5 H3.5 V4.5 H0.2"/><path transform="translate(5 0)" d="M0.5 0.5 H3.5 V4.5 H0.5 Z"/></g><g transform="translate(312 166)"><path transform="translate(0 0)" d="M0.2 0.5 H3.5 V1.5 L1.5 3.2 V4.8"/><path transform="translate(4.7 0)" d="M3.8 0.5 H0.5 V2.5 H3.5 V4.5 H0.2"/></g><g transform="translate(349 166)"><path transform="translate(0 0)" d="M0.2 0.5 H1.5 V4.8"/><path transform="translate(3 0)" d="M0.5 0.5 H3.5 V4.5 H0.5 Z"/><path transform="translate(8 0)" d="M0.5 0.5 H3.5 V4.5 H0.5 Z"/></g><g transform="translate(386 166)"><path transform="translate(0 0)" d="M0.2 0.5 H1.5 V4.8"/><path transform="translate(3 0)" d="M0.2 0.5 H3.5 V2.5 H0.5 V4.5 H3.8"/><path transform="translate(8 0)" d="M3.8 0.5 H0.5 V2.5 H3.5 V4.5 H0.2"/></g><g transform="translate(423 166)"><path transform="translate(0 0)" d="M0.2 0.5 H1.5 V4.8"/><path transform="translate(3 0)" d="M3.8 0.5 H0.5 V2.5 H3.5 V4.5 H0.2"/><path transform="translate(8 0)" d="M0.5 0.5 H3.5 V4.5 H0.5 Z"/></g><g transform="translate(460 166)"><path transform="translate(0 0)" d="M0.2 0.5 H1.5 V4.8"/><path transform="translate(3 0)" d="M0.2 0.5 H3.5 V1.5 L1.5 3.2 V4.8"/><path transform="translate(7.7 0)" d="M3.8 0.5 H0.5 V2.5 H3.5 V4.5 H0.2"/></g><g transform="translate(498 166)"><path transform="translate(0 0)" d="M0.2 0.5 H3.5 V2.5 H0.5 V4.5 H3.8"/><path transform="translate(5 0)" d="M0.5 0.5 H3.5 V4.5 H0.5 Z"/><path transform="translate(10 0)" d="M0.5 0.5 H3.5 V4.5 H0.5 Z"/></g><g transform="translate(535 166)"><path transform="translate(0 0)" d="M0.2 0.5 H3.5 V2.5 H0.5 V4.5 H3.8"/><path transform="translate(5 0)" d="M0.2 0.5 H3.5 V2.5 H0.5 V4.5 H3.8"/><path transform="translate(10 0)" d="M3.8 0.5 H0.5 V2.5 H3.5 V4.5 H0.2"/></g><g transform="translate(572 166)"><path transform="translate(0 0)" d="M0.2 0.5 H3.5 V2.5 H0.5 V4.5 H3.8"/><path transform="translate(5 0)" d="M3.8 0.5 H0.5 V2.5 H3.5 V4.5 H0.2"/><path transform="translate(10 0)" d="M0.5 0.5 H3.5 V4.5 H0.5 Z"/></g><g transform="translate(609 166)"><path transform="translate(0 0)" d="M0.2 0.5 H3.5 V2.5 H0.5 V4.5 H3.8"/><path transform="translate(5 0)" d="M0.2 0.5 H3.5 V1.5 L1.5 3.2 V4.8"/><path transform="translate(9.7 0)" d="M3.8 0.5 H0.5 V2.5 H3.5 V4.5 H0.2"/></g><g transform="translate(646 166)"><path transform="translate(0 0)" d="M0.2 0.5 H3.5 V4.5 H0.2 M1.2 2.5 H3.5"/><path transform="translate(5 0)" d="M0.5 0.5 H3.5 V4.5 H0.5 Z"/><path transform="translate(10 0)" d="M0.5 0.5 H3.5 V4.5 H0.5 Z"/></g><g transform="translate(683 166)"><path transform="translate(0 0)" d="M0.2 0.5 H3.5 V4.5 H0.2 M1.2 2.5 H3.5"/><path transform="translate(5 0)" d="M0.2 0.5 H3.5 V2.5 H0.5 V4.5 H3.8"/><path transform="translate(10 0)" d="M3.8 0.5 H0.5 V2.5 H3.5 V4.5 H0.2"/></g><g transform="translate(721 166)"><path transform="translate(0 0)" d="M0.2 0.5 H3.5 V4.5 H0.2 M1.2 2.5 H3.5"/><path transform="translate(5 0)" d="M3.8 0.5 H0.5 V2.5 H3.5 V4.5 H0.2"/><path transform="translate(10 0)" d="M0.5 0.5 H3.5 V4.5 H0.5 Z"/></g><g transform="translate(758 166)"><path transform="translate(0 0)" d="M0.2 0.5 H3.5 V4.5 H0.2 M1.2 2.5 H3.5"/><path transform="translate(5 0)" d="M0.2 0.5 H3.5 V1.5 L1.5 3.2 V4.8"/><path transform="translate(9.7 0)" d="M3.8 0.5 H0.5 V2.5 H3.5 V4.5 H0.2"/></g></g></svg></div>
<div class="a" style="left:52px;top:183px;width:20px;height:504px;overflow:hidden"><svg style="left:-52px;top:-183px" width="1043" height="772"><g fill="none" stroke="#000" stroke-width="1.15"><g transform="translate(56 696) rotate(-90)"><path transform="translate(0 0)" d="M0.2 2.5 H3.3"/><path transform="translate(4.6 0)" d="M0.2 0.5 H3.5 V1.5 L1.5 3.2 V4.8"/><path transform="translate(9.3 0)" d="M3.8 0.5 H0.5 V2.5 H3.5 V4.5 H0.2"/></g><g transform="translate(56 659) rotate(-90)"><path transform="translate(0 0)" d="M0.2 2.5 H3.3"/><path transform="translate(4.6 0)" d="M3.8 0.5 H0.5 V2.5 H3.5 V4.5 H0.2"/><path transform="translate(9.6 0)" d="M0.5 0.5 H3.5 V4.5 H0.5 Z"/></g><g transform="translate(56 621) rotate(-90)"><path transform="translate(0 0)" d="M0.2 2.5 H3.3"/><path transform="translate(4.6 0)" d="M0.2 0.5 H3.5 V2.5 H0.5 V4.5 H3.8"/><path transform="translate(9.6 0)" d="M3.8 0.5 H0.5 V2.5 H3.5 V4.5 H0.2"/></g><g transform="translate(56 584) rotate(-90)"><path transform="translate(0 0)" d="M0.5 0.5 H3.5 V4.5 H0.5 Z"/></g><g transform="translate(56 547) rotate(-90)"><path transform="translate(0 0)" d="M0.2 0.5 H3.5 V2.5 H0.5 V4.5 H3.8"/><path transform="translate(5 0)" d="M3.8 0.5 H0.5 V2.5 H3.5 V4.5 H0.2"/></g><g transform="translate(56 510) rotate(-90)"><path transform="translate(0 0)" d="M3.8 0.5 H0.5 V2.5 H3.5 V4.5 H0.2"/><path transform="translate(5 0)" d="M0.5 0.5 H3.5 V4.5 H0.5 Z"/></g><g transform="translate(56 473) rotate(-90)"><path transform="translate(0 0)" d="M0.2 0.5 H3.5 V1.5 L1.5 3.2 V4.8"/><path transform="translate(4.7 0)" d="M3.8 0.5 H0.5 V2.5 H3.5 V4.5 H0.2"/></g><g transform="translate(56 435) rotate(-90)"><path transform="translate(0 0)" d="M0.2 0.5 H1.5 V4.8"/><path transform="translate(3 0)" d="M0.5 0.5 H3.5 V4.5 H0.5 Z"/><path transform="translate(8 0)" d="M0.5 0.5 H3.5 V4.5 H0.5 Z"/></g><g transform="translate(56 398) rotate(-90)"><path transform="translate(0 0)" d="M0.2 0.5 H1.5 V4.8"/><path transform="translate(3 0)" d="M0.2 0.5 H3.5 V2.5 H0.5 V4.5 H3.8"/><path transform="translate(8 0)" d="M3.8 0.5 H0.5 V2.5 H3.5 V4.5 H0.2"/></g><g transform="translate(56 361) rotate(-90)"><path transform="translate(0 0)" d="M0.2 0.5 H1.5 V4.8"/><path transform="translate(3 0)" d="M3.8 0.5 H0.5 V2.5 H3.5 V4.5 H0.2"/><path transform="translate(8 0)" d="M0.5 0.5 H3.5 V4.5 H0.5 Z"/></g><g transform="translate(56 324) rotate(-90)"><path transform="translate(0 0)" d="M0.2 0.5 H1.5 V4.8"/><path transform="translate(3 0)" d="M0.2 0.5 H3.5 V1.5 L1.5 3.2 V4.8"/><path transform="translate(7.7 0)" d="M3.8 0.5 H0.5 V2.5 H3.5 V4.5 H0.2"/></g><g transform="translate(56 287) rotate(-90)"><path transform="translate(0 0)" d="M0.2 0.5 H3.5 V2.5 H0.5 V4.5 H3.8"/><path transform="translate(5 0)" d="M0.5 0.5 H3.5 V4.5 H0.5 Z"/><path transform="translate(10 0)" d="M0.5 0.5 H3.5 V4.5 H0.5 Z"/></g><g transform="translate(56 249) rotate(-90)"><path transform="translate(0 0)" d="M0.2 0.5 H3.5 V2.5 H0.5 V4.5 H3.8"/><path transform="translate(5 0)" d="M0.2 0.5 H3.5 V2.5 H0.5 V4.5 H3.8"/><path transform="translate(10 0)" d="M3.8 0.5 H0.5 V2.5 H3.5 V4.5 H0.2"/></g><g transform="translate(56 212) rotate(-90)"><path transform="translate(0 0)" d="M0.2 0.5 H3.5 V2.5 H0.5 V4.5 H3.8"/><path transform="translate(5 0)" d="M3.8 0.5 H0.5 V2.5 H3.5 V4.5 H0.2"/><path transform="translate(10 0)" d="M0.5 0.5 H3.5 V4.5 H0.5 Z"/></g></g></svg></div>
<div class="a" style="left:204px;top:277px;width:443px;height:313px;background:#808080"></div>
<div class="a" style="left:199px;top:272px;width:443px;height:313px;background:#fff;border:1px solid #000"></div>
<div class="t" style="left:288px;top:368px;font-family:'Liberation Serif',serif;font-weight:bold;font-size:50.25px;color:#2d2c2b;line-height:1">Lorem ispum</div>
<svg style="left:0;top:0" width="1043" height="772"><rect x="279.5" y="450.5" width="289" height="57" fill="none" stroke="#000" stroke-width="1" stroke-dasharray="5 5"/></svg>
<div class="t" style="left:280px;top:453.6px;font-family:'Liberation Serif',serif;font-weight:bold;font-size:50.25px;color:#2d2c2b;line-height:1">L</div>
<div class="t" style="left:313.2px;top:453.6px;font-family:'Liberation Serif',serif;font-weight:bold;font-size:50.25px;color:#2d2c2b;line-height:1">o</div>
<div class="t" style="left:342.8px;top:436.7px;font-family:'Liberation Serif',serif;font-weight:bold;font-size:50.25px;color:#2d2c2b;line-height:1">r</div>
<div class="t" style="left:360.4px;top:453.6px;font-family:'Liberation Serif',serif;font-weight:bold;font-size:50.25px;color:#2d2c2b;line-height:1">e</div>
<div class="t" style="left:383.4px;top:453.6px;font-family:'Liberation Serif',serif;font-weight:bold;font-size:50.25px;color:#2d2c2b;line-height:1">m</div>
<div class="t" style="left:432.3px;top:473.6px;font-family:'Liberation Serif',serif;font-weight:bold;font-size:50.25px;color:#2d2c2b;line-height:1">i</div>
<div class="t" style="left:446.1px;top:473.6px;font-family:'Liberation Serif',serif;font-weight:bold;font-size:50.25px;color:#2d2c2b;line-height:1">s</div>
<div class="t" style="left:465.8px;top:473.6px;font-family:'Liberation Serif',serif;font-weight:bold;font-size:50.25px;color:#2d2c2b;line-height:1">p</div>
<div class="t" style="left:494.1px;top:473.6px;font-family:'Liberation Serif',serif;font-weight:bold;font-size:50.25px;color:#2d2c2b;line-height:1">u</div>
<div class="t" style="left:527.7px;top:453.6px;font-family:'Liberation Serif',serif;font-weight:bold;font-size:50.25px;color:#2d2c2b;line-height:1">m</div>
<svg style="left:0;top:0" width="1043" height="772"><rect x="277.5" y="493.5" width="5" height="5" fill="#fff" stroke="#1060ff" stroke-width="1"/><rect x="311.5" y="493.5" width="5" height="5" fill="#fff" stroke="#1060ff" stroke-width="1"/><rect x="340.5" y="476.5" width="5" height="5" fill="#fff" stroke="#1060ff" stroke-width="1"/><rect x="358.5" y="493.5" width="5" height="5" fill="#fff" stroke="#1060ff" stroke-width="1"/><rect x="380.5" y="493.5" width="5" height="5" fill="#fff" stroke="#1060ff" stroke-width="1"/><rect x="430.5" y="513.5" width="5" height="5" fill="#f08080" stroke="#1060ff" stroke-width="1"/><rect x="444.5" y="513.5" width="5" height="5" fill="#f08080" stroke="#1060ff" stroke-width="1"/><rect x="464.5" y="513.5" width="5" height="5" fill="#f08080" stroke="#1060ff" stroke-width="1"/><rect x="491.5" y="513.5" width="5" height="5" fill="#f08080" stroke="#1060ff" stroke-width="1"/><rect x="524.5" y="493.5" width="5" height="5" fill="#fff" stroke="#1060ff" stroke-width="1"/></svg>
<div class="a" style="left:768px;top:674px;width:13px;height:13px;background:#f2f1f0"></div>
<div class="a" style="left:768px;top:184px;width:13px;height:490px;border:1px solid #c4c0bb;border-radius:6px;background:linear-gradient(90deg,#e2e1df,#ededeb)"></div>
<div class="a" style="left:769px;top:185px;width:11px;height:16px;border-radius:5px 5px 0 0;background:#fff"></div>
<div class="a" style="left:769px;top:657px;width:11px;height:16px;border-radius:0 0 5px 5px;background:#fff"></div>
<div class="a" style="left:768px;top:196px;width:13px;height:8px;border:1px solid #c4c0bb;border-bottom:none;border-radius:6px 6px 0 0;background:#e3e2e0"></div>
<svg style="left:771px;top:188px" width="7" height="5" viewBox="0 0 7 5"><path d="M0 4.5 L3.5 0.5 L7 4.5 Z" fill="#6a6a6a"/></svg>
<svg style="left:771px;top:665px" width="7" height="5" viewBox="0 0 7 5"><path d="M0 0.5 L3.5 4.5 L7 0.5 Z" fill="#6a6a6a"/></svg>
<div class="a" style="left:768px;top:407px;width:13px;height:42px;border:1px solid #b7b2ac;border-radius:6px;background:linear-gradient(90deg,#f6f6f5,#fefefe,#ecebea)"></div>
<svg style="left:772px;top:423px" width="5" height="8"><path d="M0 1 H5 M0 3.5 H5 M0 6 H5" stroke="#a09c97" stroke-width="1"/></svg>
<div class="a" style="left:73px;top:674px;width:695px;height:13px;border:1px solid #c4c0bb;border-radius:6px;background:linear-gradient(#e2e1df,#ededeb)"></div>
<div class="a" style="left:74px;top:675px;width:16px;height:11px;border-radius:5px 0 0 5px;background:#fff"></div>
<div class="a" style="left:751px;top:675px;width:16px;height:11px;border-radius:0 5px 5px 0;background:#fff"></div>
<svg style="left:78px;top:677px" width="5" height="7" viewBox="0 0 5 7"><path d="M4.5 0 L0.5 3.5 L4.5 7 Z" fill="#6a6a6a"/></svg>
<svg style="left:760px;top:677px" width="5" height="7" viewBox="0 0 5 7"><path d="M0.5 0 L4.5 3.5 L0.5 7 Z" fill="#6a6a6a"/></svg>
<div class="a" style="left:390px;top:674px;width:60px;height:13px;border:1px solid #b7b2ac;border-radius:6px;background:linear-gradient(#f6f6f5,#fefefe,#ecebea)"></div>
<svg style="left:416px;top:678px" width="8" height="5"><path d="M1 0 V5 M3.5 0 V5 M6 0 V5" stroke="#a09c97" stroke-width="1"/></svg>
<div class="a" style="left:21px;top:689px;width:1000px;height:1px;background:#d9d5d0"></div>
<div class="a" style="left:786px;top:163px;width:1px;height:523px;background:#d3cfca"></div>
<svg style="left:781px;top:422px" width="5" height="8"><path d="M0 1 H5 M0 3.5 H5 M0 6 H5" stroke="#b0aca7" stroke-width="1"/></svg>
<div class="a" style="left:822px;top:169px;width:26px;height:26px;border:1px solid #bcb8b3;border-radius:5px;background:linear-gradient(#e6e5e3,#f1f0ee)"></div>
<svg style="left:0;top:0" width="1043" height="772"><g fill="none" stroke="#000" stroke-width="1">
<rect x="831.5" y="178.5" width="8" height="8" fill="#fff" stroke="#777"/>
<path d="M835.5 175.5 V190 M828 182.5 H843.5" stroke="#000" stroke-width="1.1"/>
<path d="M833.5 180.5 H837.5 M833.5 184.5 H837.5" stroke="#999" stroke-width="0.6" stroke-dasharray="1 1"/>
</g>
<path d="M835.5 174.5 L837.8 177.3 H833.2 Z M835.5 190.5 L837.8 187.7 H833.2 Z M827.5 182.5 L830.3 180.2 V184.8 Z M843.5 182.5 L840.7 180.2 V184.8 Z" fill="#000"/>
<rect x="855.5" y="174.5" width="14" height="14" fill="none" stroke="#666" stroke-width="0.8" stroke-dasharray="1 1"/>
<rect x="855.5" y="180.5" width="8" height="8" fill="#fff" stroke="#000" stroke-width="1.2"/>
<path d="M860.5 180 V177 M864 183.5 H868" stroke="#000" stroke-width="1"/>
<path d="M860.5 175 L862.3 177.5 H858.7 Z M869.5 183.5 L867 181.7 V185.3 Z" fill="#000"/>
<rect x="883.5" y="175.5" width="14" height="5" fill="#fff" stroke="#000" stroke-width="1.1"/>
<path d="M883.5 182.5 H898" stroke="#ee0000" stroke-width="1" stroke-dasharray="2.2 1"/>
<rect x="883.5" y="184.5" width="14" height="4.5" fill="none" stroke="#777" stroke-width="0.7" stroke-dasharray="1 1"/>
<rect x="915.5" y="180.5" width="11.5" height="9" fill="#fff" stroke="#000" stroke-width="1.2"/>
<path d="M912.5 181 V178.5 Q912.5 176 915 176 H918" fill="none" stroke="#000" stroke-width="1"/>
<path d="M910.5 180.5 L912.5 183.5 L914.5 180.5 Z M920.5 176 L918 174 V178 Z" fill="#000"/>
<rect x="939.5" y="179.5" width="6.5" height="8" fill="#fff" stroke="#000" stroke-width="1.1"/>
<path d="M940 175.8 H951" stroke="#000" stroke-width="1"/><path d="M953.5 175.8 L950.5 173.8 V177.8 Z" fill="#000"/>
<path d="M946.5 179.5 H953 L946.5 187.5" fill="none" stroke="#888" stroke-width="0.7" stroke-dasharray="1 1"/></svg>
<div class="a" style="left:793px;top:199px;width:196px;height:1px;background:#dbd8d4"></div>
<div class="t" style="left:861.5px;top:212px;font-size:14px;font-weight:bold;letter-spacing:0.35px;color:#4a4a4a">Position</div>
<svg style="left:793px;top:242px" width="16" height="13" viewBox="0 0 16 13"><path d="M0.5 0 V13 M15.5 0 V13" stroke="#444" stroke-width="0.8" stroke-dasharray="1 1"/>
<path d="M1 6.5 H15" stroke="#000" stroke-width="1.3"/><path d="M0.8 6.5 L4 4 V9 Z M15.2 6.5 L12 4 V9 Z" fill="#000"/></svg>
<svg style="left:794px;top:269px" width="13" height="18" viewBox="0 0 13 18"><path d="M0 0.5 H13 M0 17.5 H13" stroke="#444" stroke-width="0.8" stroke-dasharray="1 1"/>
<path d="M6.5 1 V17" stroke="#000" stroke-width="1.3"/><path d="M6.5 0.8 L4 4 H9 Z M6.5 17.2 L4 14 H9 Z" fill="#000"/></svg>
<div class="a" style="left:812px;top:237px;width:78px;height:25px;border:1px solid #d3d0cb;border-radius:4px;background:#eae9e7"></div>
<div class="a" style="left:875px;top:238px;width:1px;height:23px;background:#fdfdfd"></div>
<div class="t" style="left:816.5px;top:243.5px;font-size:14.5px;color:#b8b3ad">0.0</div>
<svg style="left:878px;top:244px" width="8" height="12"><path d="M0.5 4 L4 0.5 L7.5 4 Z" fill="#bdbab6"/><path d="M0.5 8 L7.5 8 L4 11.5 Z" fill="#bdbab6"/></svg>
<div class="t" style="left:893.5px;top:242.5px;font-size:15px;color:#4a4a4a;-webkit-text-stroke:0.2px #4a4a4a">mm</div>
<div class="a" style="left:812px;top:266.5px;width:78px;height:25px;border:1px solid #d3d0cb;border-radius:4px;background:#eae9e7"></div>
<div class="a" style="left:875px;top:267.5px;width:1px;height:23px;background:#fdfdfd"></div>
<div class="t" style="left:816.5px;top:273.0px;font-size:14.5px;color:#b8b3ad">0.0</div>
<svg style="left:878px;top:273.5px" width="8" height="12"><path d="M0.5 4 L4 0.5 L7.5 4 Z" fill="#bdbab6"/><path d="M0.5 8 L7.5 8 L4 11.5 Z" fill="#bdbab6"/></svg>
<div class="t" style="left:893.5px;top:272.0px;font-size:15px;color:#4a4a4a;-webkit-text-stroke:0.2px #4a4a4a">mm</div>
<div class="a" style="left:796px;top:307px;width:14px;height:14px;border:1px solid #cdc9c4;border-radius:3px;background:#e4e3e1"></div>
<div class="t" style="left:817.5px;top:306.5px;font-size:15px;letter-spacing:0.35px;color:#b3aea8">Absolute position</div>
<svg style="left:0;top:0" width="1043" height="772"><path d="M821.5 354.5 V404.5" stroke="#dcd9d5" stroke-width="1"/><path d="M853.5 354.5 V404.5" stroke="#dcd9d5" stroke-width="1"/><path d="M885.5 354.5 V404.5" stroke="#dcd9d5" stroke-width="1"/><path d="M828.5 347.5 H878.5" stroke="#dcd9d5" stroke-width="1"/><path d="M828.5 379.5 H878.5" stroke="#dcd9d5" stroke-width="1"/><path d="M828.5 411.5 H878.5" stroke="#dcd9d5" stroke-width="1"/><rect x="815.5" y="341.5" width="12" height="12" fill="#f2f1f0" stroke="#bdb9b4" stroke-width="1"/><rect x="847.5" y="341.5" width="12" height="12" fill="#f2f1f0" stroke="#bdb9b4" stroke-width="1"/><rect x="879.5" y="341.5" width="12" height="12" fill="#f2f1f0" stroke="#bdb9b4" stroke-width="1"/><rect x="815.5" y="373.5" width="12" height="12" fill="#f2f1f0" stroke="#bdb9b4" stroke-width="1"/><rect x="847.5" y="373.5" width="12" height="12" fill="#f2f1f0" stroke="#bdb9b4" stroke-width="1"/><rect x="879.5" y="373.5" width="12" height="12" fill="#f2f1f0" stroke="#bdb9b4" stroke-width="1"/><rect x="815.5" y="405.5" width="12" height="12" fill="#f2f1f0" stroke="#bdb9b4" stroke-width="1"/><rect x="847.5" y="405.5" width="12" height="12" fill="#f2f1f0" stroke="#bdb9b4" stroke-width="1"/><rect x="879.5" y="405.5" width="12" height="12" fill="#f2f1f0" stroke="#bdb9b4" stroke-width="1"/><rect x="850" y="376" width="7" height="7" fill="#c8bfbd"/></svg>
<svg style="left:900px;top:350px" width="60" height="60" viewBox="0 0 60 60"><rect x="15.5" y="5.5" width="36" height="47" fill="#fff" stroke="#000" stroke-width="1.2"/>
<path d="M17 47 V21 M17 47 H40 M17 33 H34 V47 M17 40 H26 V47" stroke="#b0b0b0" stroke-width="0.7" stroke-dasharray="1 1" fill="none"/>
<path d="M14.6 57.5 V14" stroke="#ee1111" stroke-width="1.8"/><path d="M14.6 6 L8.6 17 L14.6 14.5 L20.6 17 Z" fill="#ee1111" stroke="#ee1111" stroke-width="0.6" stroke-linejoin="round"/>
<path d="M8 52.8 H40" stroke="#ee1111" stroke-width="1.8"/><path d="M47.5 52.8 L36.5 46.8 L39 52.8 L36.5 58.8 Z" fill="#ee1111" stroke="#ee1111" stroke-width="0.6" stroke-linejoin="round"/>
<text x="20.5" y="15.5" font-family="Liberation Sans" font-size="11" fill="#111">y</text>
<text x="41.5" y="46.5" font-family="Liberation Sans" font-size="11" fill="#111">x</text></svg>
<div class="a" style="left:794px;top:429px;width:194px;height:27px;border:1px solid #cfcbc6;border-radius:4px;background:linear-gradient(#f7f7f6,#efeeec)"></div>
<div class="t" style="left:845px;top:435px;font-size:15px;letter-spacing:0.15px;color:#b3aea8">Apply to copy</div>
<div class="a" style="left:794px;top:462px;width:194px;height:26px;border:1px solid #cfcbc6;border-radius:4px;background:linear-gradient(#f7f7f6,#efeeec)"></div>
<div class="t" style="left:871px;top:468px;font-size:15px;letter-spacing:0.15px;color:#b3aea8">Apply</div>
<div class="a" style="left:793px;top:492px;width:196px;height:1px;background:#dbd8d4"></div>
<div class="a" style="left:995px;top:163px;width:1px;height:523px;background:#c8c4bf"></div>
<div class="a" style="left:995px;top:553px;width:26px;height:134px;border-left:1px solid #c0bcb7;background:linear-gradient(90deg,#dfdedc,#eceae8 60%,#efeeec)"></div>
<div class="a" style="left:994px;top:166px;width:21px;height:85px;border:1px solid #c9c5c0;border-left:none;border-radius:0 4px 4px 0;background:linear-gradient(90deg,#efeeec,#f6f6f5)"></div>
<svg style="left:998px;top:171px" width="16" height="16"><rect x="0.5" y="0.5" width="14" height="14" fill="#fff" stroke="#aaa"/><path d="M0 1.2 H15" stroke="#f08a20" stroke-width="2.4"/><rect x="3" y="5" width="9" height="3" fill="none" stroke="#444" stroke-width="1"/><path d="M3 10.5 H12" stroke="#444" stroke-width="1"/></svg>
<div class="t" style="left:1012px;top:190.5px;font-size:13.5px;color:#222;-webkit-text-stroke:0.2px #222;transform:rotate(90deg) scaleX(0.88);transform-origin:0 0">Layers</div>
<svg style="left:1001px;top:235.5px" width="8" height="7"><path d="M1 1 L7 6 M7 1 L1 6" stroke="#222" stroke-width="1.3"/></svg>
<div class="a" style="left:994px;top:252px;width:21px;height:160px;border:1px solid #c9c5c0;border-left:none;border-radius:0 4px 4px 0;background:linear-gradient(90deg,#efeeec,#f6f6f5)"></div>
<svg style="left:998px;top:257px" width="16" height="16"><rect x="0.5" y="0.5" width="14" height="14" fill="#fff" stroke="#aaa"/><path d="M0 1.2 H15" stroke="#f08a20" stroke-width="2.4"/><rect x="4" y="4.5" width="9" height="8" fill="#fff" stroke="#333" stroke-width="1"/><path d="M2.5 3 V14" stroke="#2a6ae0" stroke-width="1" stroke-dasharray="1.5 1"/><path d="M8.5 6 V11 M6.5 11 H10.5" stroke="#333" stroke-width="0.8"/></svg>
<div class="t" style="left:1012px;top:276px;font-size:13.5px;color:#222;-webkit-text-stroke:0.2px #222;transform:rotate(90deg) scaleX(0.945);transform-origin:0 0">Align and Distribute</div>
<svg style="left:1001px;top:397px" width="8" height="7"><path d="M1 1 L7 6 M7 1 L1 6" stroke="#222" stroke-width="1.3"/></svg>
<div class="a" style="left:994px;top:413px;width:23px;height:140px;border:1px solid #c9c5c0;border-left:none;border-radius:0 4px 4px 0;background:linear-gradient(90deg,#efeeec,#f6f6f5)"></div>
<svg style="left:998px;top:418px" width="16" height="16"><rect x="0.5" y="0.5" width="14" height="14" fill="#fff" stroke="#aaa"/><path d="M0 1.2 H15" stroke="#f08a20" stroke-width="2.4"/><path d="M7.5 4 V13 M3 8.5 H12" stroke="#000" stroke-width="0.9" stroke-dasharray="1.2 0.8"/><path d="M7.5 3.5 L9 5.5 H6 Z M7.5 13.5 L9 11.5 H6 Z M2.5 8.5 L4.5 7 V10 Z M12.5 8.5 L10.5 7 V10 Z" fill="#000"/></svg>
<div class="t" style="left:1013.5px;top:438px;font-size:13.5px;color:#222;-webkit-text-stroke:0.2px #222;transform:rotate(90deg) scaleX(0.93);transform-origin:0 0">Transformations</div>
<svg style="left:1002px;top:537.5px" width="8" height="7"><path d="M1 1 L7 6 M7 1 L1 6" stroke="#222" stroke-width="1.3"/></svg>
<svg style="left:29px;top:697px" width="7" height="12" viewBox="0 0 7 12"><path d="M6 1 L1 6 L6 11" fill="none" stroke="#9b9792" stroke-width="1.6"/></svg>
<svg style="left:1008px;top:696px" width="7" height="12" viewBox="0 0 7 12"><path d="M1 1 L6 6 L1 11" fill="none" stroke="#4c4c4c" stroke-width="1.6"/></svg>
<svg style="left:43px;top:694px" width="18" height="18" viewBox="0 0 18 18"><rect x="0.5" y="0.5" width="17" height="17" rx="1.5" fill="#fff" stroke="#444" stroke-width="1"/><path d="M2.8 2.8 L15.2 15.2 M15.2 2.8 L2.8 15.2" stroke="#3a3a3a" stroke-width="1.4"/></svg>
<svg style="left:0;top:0" width="1043" height="772"><rect x="63.5" y="694.5" width="39" height="17" fill="#1aabf8" stroke="#000" stroke-width="1"/><rect x="102.5" y="694.5" width="39" height="17" fill="#0080c6" stroke="#000" stroke-width="1"/><rect x="141.5" y="694.5" width="39" height="17" fill="#005890" stroke="#000" stroke-width="1"/><rect x="180.5" y="694.5" width="39" height="17" fill="#ff4040" stroke="#000" stroke-width="1"/><rect x="219.5" y="694.5" width="39" height="17" fill="#dd0000" stroke="#000" stroke-width="1"/><rect x="258.5" y="694.5" width="39" height="17" fill="#ad0000" stroke="#000" stroke-width="1"/><rect x="297.5" y="694.5" width="39" height="17" fill="#ffff44" stroke="#000" stroke-width="1"/><rect x="336.5" y="694.5" width="39" height="17" fill="#ff9a00" stroke="#000" stroke-width="1"/><rect x="375.5" y="694.5" width="39" height="17" fill="#ff6600" stroke="#000" stroke-width="1"/><rect x="414.5" y="694.5" width="39" height="17" fill="#ffbf22" stroke="#000" stroke-width="1"/><rect x="453.5" y="694.5" width="39" height="17" fill="#b87c00" stroke="#000" stroke-width="1"/><rect x="492.5" y="694.5" width="39" height="17" fill="#7a4800" stroke="#000" stroke-width="1"/><rect x="531.5" y="694.5" width="39" height="17" fill="#ccff44" stroke="#000" stroke-width="1"/><rect x="570.5" y="694.5" width="39" height="17" fill="#99dd00" stroke="#000" stroke-width="1"/><rect x="609.5" y="694.5" width="39" height="17" fill="#008a00" stroke="#000" stroke-width="1"/><rect x="648.5" y="694.5" width="39" height="17" fill="#f2ccff" stroke="#000" stroke-width="1"/><rect x="687.5" y="694.5" width="39" height="17" fill="#d877ff" stroke="#000" stroke-width="1"/><rect x="726.5" y="694.5" width="39" height="17" fill="#b000f0" stroke="#000" stroke-width="1"/><rect x="765.5" y="694.5" width="39" height="17" fill="#bccdd4" stroke="#000" stroke-width="1"/><rect x="804.5" y="694.5" width="39" height="17" fill="#98a5aa" stroke="#000" stroke-width="1"/><rect x="843.5" y="694.5" width="39" height="17" fill="#344c58" stroke="#000" stroke-width="1"/><rect x="882.5" y="694.5" width="39" height="17" fill="#0e212a" stroke="#000" stroke-width="1"/><rect x="921.5" y="694.5" width="39" height="17" fill="#ffffff" stroke="#000" stroke-width="1"/><rect x="960.5" y="694.5" width="39" height="17" fill="#cccccc" stroke="#000" stroke-width="1"/></svg>
<div class="a" style="left:21px;top:715px;width:1000px;height:1px;background:#dad6d1"></div>
<svg style="left:26px;top:721px" width="17" height="17" viewBox="0 0 17 17"><path d="M1.5 1 V11 M1 1.5 H11 M11.5 1 V6 M1 11.5 H6" stroke="#8a8a8a" stroke-width="1" stroke-dasharray="1 1"/><path d="M7.5 11.5 H15.5 M11.5 7.5 V15.5" stroke="#000" stroke-width="1.1"/></svg>
<div class="t" style="left:47.5px;top:723px;font-size:12.4px;color:#4a4a4a">-83 x 103 mm</div>
<div class="a" style="left:144px;top:720px;width:1px;height:17px;background:#d8d4cf"></div>
<div class="a" style="left:230px;top:720px;width:1px;height:17px;background:#d8d4cf"></div>
<svg style="left:150px;top:720px" width="17" height="17" viewBox="0 0 17 17"><rect x="0.5" y="0.5" width="15" height="15" fill="#fff" stroke="#c4c4c4"/><path d="M4.5 0.5 V15.5 M8.5 0.5 V15.5 M12.5 0.5 V15.5 M0.5 4.5 H15.5 M0.5 8.5 H15.5 M0.5 12.5 H15.5" stroke="#cfcfcf" stroke-width="1"/><rect x="10.5" y="10.5" width="5.5" height="5.5" fill="#c8c8c8" stroke="#777"/></svg>
<svg style="left:169px;top:720px" width="17" height="17" viewBox="0 0 17 17"><rect x="0.5" y="0.5" width="15" height="15" fill="#fff" stroke="#bdbdbd"/><path d="M0.5 5.5 H15.5 M5 0.5 V15.5" stroke="#1a6ef0" stroke-width="1.1" stroke-dasharray="2 1.2"/><rect x="10.5" y="10" width="5.5" height="6" fill="#18d018" stroke="#222"/></svg>
<svg style="left:189px;top:720px" width="17" height="17" viewBox="0 0 17 17"><rect x="0.5" y="0.5" width="15" height="15" fill="#f4f4f4" stroke="#b8b8b8"/><rect x="2" y="3" width="6" height="6" fill="#c6c6c6"/><path d="M0.5 3.5 H15.5 M8.5 0.5 V15.5" stroke="#666" stroke-width="1" stroke-dasharray="1.5 1"/><rect x="10.5" y="10.5" width="5.5" height="5.5" fill="#c8c8c8" stroke="#777"/></svg>
<svg style="left:210px;top:720px" width="17" height="17" viewBox="0 0 17 17"><rect x="0.5" y="0.5" width="15" height="15" fill="#f4f4f4" stroke="#b8b8b8"/><path d="M3 2.5 H12.5 V13.5 H3 Z" fill="#f8f8f8" stroke="#aaa"/><rect x="10.5" y="10.5" width="5.5" height="5.5" fill="#c8c8c8" stroke="#777"/></svg>
<svg style="left:233px;top:720px" width="18" height="18" viewBox="0 0 18 18"><path d="M9 1.2 L16.8 9 L9 16.8 L1.2 9 Z" fill="#fff" stroke="#111" stroke-width="1.4"/><circle cx="9" cy="5.6" r="1.2" fill="#111"/><path d="M7.5 7.8 H9.6 V12.6 M7.3 12.6 H11" stroke="#111" stroke-width="1.4" fill="none"/></svg>
<div class="t" style="left:255px;top:723px;font-size:12.4px;color:#4a4a4a;letter-spacing:0.2px">No selection</div>
<div class="t" style="left:701px;top:723px;font-size:12.4px;color:#4a4a4a;letter-spacing:-0.35px">Fill: C-0% M-0% Y-0% K-100%</div>
<div class="a" style="left:862px;top:721px;width:35px;height:16px;background:#2b2b2b;border:1px solid #000"></div>
<div class="t" style="left:903.5px;top:723px;font-size:12.4px;color:#4a4a4a">Stroke: None</div>
<svg style="left:979px;top:721px" width="35" height="16" viewBox="0 0 35 16"><rect x="0.5" y="0.5" width="34" height="15" fill="#fff" stroke="#000" stroke-width="1"/><path d="M1 1 L34 15 M34 1 L1 15" stroke="#ff2020" stroke-width="1"/></svg>
</body></html>
